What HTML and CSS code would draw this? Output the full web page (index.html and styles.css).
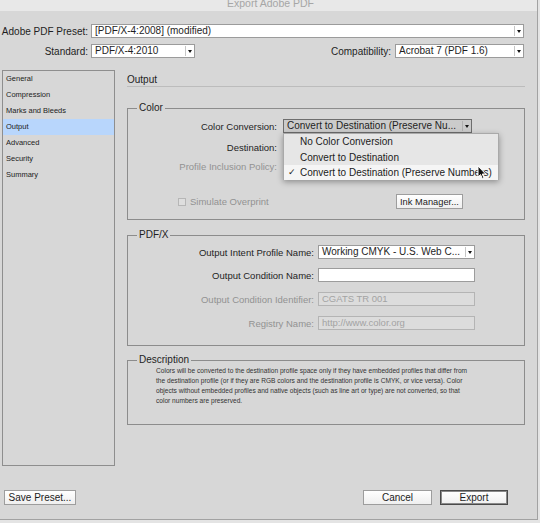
FILE: index.html
```html
<!DOCTYPE html>
<html>
<head>
<meta charset="utf-8">
<link rel="stylesheet" href="styles.css">
</head>
<body>
<div class="window">
  <div class="titlebar"><span class="title">Export Adobe PDF</span></div>
  <div class="top">
    <div class="row">
      <span class="lbl lbl-top">Adobe PDF Preset:</span>
      <div class="select grow"><span class="val">[PDF/X-4:2008] (modified)</span><span class="arr"></span></div>
    </div>
    <div class="row row2">
      <span class="lbl lbl-top">Standard:</span>
      <div class="select std"><span class="val">PDF/X-4:2010</span><span class="arr"></span></div>
      <span class="lbl compat-lbl">Compatibility:</span>
      <div class="select compat"><span class="val">Acrobat 7 (PDF 1.6)</span><span class="arr"></span></div>
    </div>
  </div>
  <div class="main">
    <ul class="sidebar">
      <li>General</li>
      <li>Compression</li>
      <li>Marks and Bleeds</li>
      <li class="active">Output</li>
      <li>Advanced</li>
      <li>Security</li>
      <li>Summary</li>
    </ul>
    <div class="content">
      <div class="heading">Output</div>
      <fieldset class="group color">
        <legend>Color</legend>
        <div class="frow cr1">
          <span class="flbl">Color Conversion:</span>
          <div class="select open cc">
            <span class="val">Convert to Destination (Preserve Nu...</span><span class="arr"></span>
            <div class="menu">
              <div class="mitem">No Color Conversion</div>
              <div class="mitem">Convert to Destination</div>
              <div class="mitem checked"><span class="check">✓</span>Convert to Destination (Preserve Numbers)</div>
              <svg class="cursor" width="10" height="15" viewBox="0 0 10 15"><path d="M1 1 L1 12 L3.6 9.6 L5.4 13.8 L7 13.1 L5.3 9 L8.6 9 Z" fill="#111" stroke="#fff" stroke-width="1"/></svg>
            </div>
          </div>
        </div>
        <div class="frow cr2"><span class="flbl">Destination:</span></div>
        <div class="frow cr3"><span class="flbl disabled">Profile Inclusion Policy:</span></div>
        <div class="frow cr4">
          <span class="checkbox"></span>
          <span class="disabled sim">Simulate Overprint</span>
          <span class="btn ink">Ink Manager...</span>
        </div>
      </fieldset>
      <fieldset class="group pdfx">
        <legend>PDF/X</legend>
        <div class="prow pr1">
          <span class="plbl">Output Intent Profile Name:</span>
          <div class="select pctl"><span class="val">Working CMYK - U.S. Web C...</span><span class="arr"></span></div>
        </div>
        <div class="prow pr2">
          <span class="plbl">Output Condition Name:</span>
          <div class="input pctl"></div>
        </div>
        <div class="prow pr3">
          <span class="plbl disabled">Output Condition Identifier:</span>
          <div class="input pctl dis">CGATS TR 001</div>
        </div>
        <div class="prow pr4">
          <span class="plbl disabled">Registry Name:</span>
          <div class="input pctl dis">http://www.color.org</div>
        </div>
      </fieldset>
      <fieldset class="group desc">
        <legend>Description</legend>
        <p class="desctext">Colors will be converted to the destination profile space only if they have embedded profiles that differ from<br>the destination profile (or if they are RGB colors and the destination profile is CMYK, or vice versa). Color<br>objects without embedded profiles and native objects (such as line art or type) are not converted, so that<br>color numbers are preserved.</p>
      </fieldset>
    </div>
  </div>
  <div class="footer">
    <span class="btn save">Save Preset...</span>
    <span class="btn cancel">Cancel</span>
    <span class="btn export">Export</span>
  </div>
</div>
</body>
</html>
```
FILE: styles.css
```css
* { box-sizing: border-box; }
html, body { margin: 0; padding: 0; }
body {
  width: 540px;
  height: 523px;
  background: #e4e4e4;
  font-family: "Liberation Sans", Arial, sans-serif;
  color: #1e1e1e;
  overflow: hidden;
}
.window {
  width: 538px;
  height: 520px;
  background: #d7d7d7;
  border-right: 1px solid #a2a2a2;
  border-bottom: 1px solid #a2a2a2;
  display: flex;
  flex-direction: column;
}
.titlebar {
  height: 11px;
  background: #e8e8e8;
  overflow: hidden;
  text-align: center;
  padding-left: 4px;
}
.title {
  display: block;
  font-size: 10.5px;
  line-height: 11px;
  margin-top: -2px;
  color: #a6a6a6;
}
.top { padding: 13px 13px 0 0; }
.row { display: flex; align-items: center; height: 14px; }
.row2 { margin-top: 6px; }
.lbl { font-size: 10px; white-space: nowrap; }
.lbl-top { width: 88px; text-align: right; margin-right: 3px; }
.compat-lbl { margin-left: auto; margin-right: 4px; }

.select {
  height: 14px;
  border: 1px solid #9b9b9b;
  background: #fff;
  display: flex;
  align-items: center;
  font-size: 10px;
  position: relative;
}
.select .val { flex: 1; padding-left: 3px; line-height: 12px; white-space: nowrap; overflow: hidden; }
.select .arr {
  width: 9px;
  height: 10px;
  border-left: 1px solid #c6c6c6;
  display: flex;
  align-items: center;
  justify-content: center;
}
.select .arr::after {
  content: "";
  border-left: 2.5px solid transparent;
  border-right: 2.5px solid transparent;
  border-top: 3px solid #151515;
}
.grow { flex: 1; }
.std { width: 104px; }
.compat { width: 129px; }

.main { display: flex; margin-top: 12px; height: 396px; }
.sidebar {
  list-style: none;
  margin: 0 0 0 2px;
  padding: 0;
  width: 113px;
  height: 396px;
  border: 1px solid #8e8e8e;
}
.sidebar li {
  height: 16px;
  line-height: 16px;
  font-size: 7.5px;
  padding-left: 3px;
  color: #222;
}
.sidebar li.active { background: #b8d6fc; }

.content { margin-left: 12px; width: 398px; }
.heading {
  font-size: 10px;
  line-height: 13px;
  padding-top: 3px;
  height: 17px;
  border-bottom: 1px solid #bcbcbc;
}
.group {
  margin: 0;
  border: 1px solid #8c8c8c;
  padding: 0;
  min-width: 0;
}
.group legend {
  font-size: 10px;
  line-height: 12px;
  padding: 0 2px;
  margin-left: 9px;
}
.color { margin-top: 15px; padding: 5px 0 10px 0; }
.frow { display: flex; align-items: center; height: 14px; }
.flbl { width: 149px; text-align: right; font-size: 9.5px; white-space: nowrap; margin-right: 6px; }
.disabled { color: #929292; }
.cr2 { margin-top: 7px; }
.cr3 { margin-top: 5px; }
.cr4 { margin-top: 21px; height: 15px; }
.cc { width: 189px; background: #cbcbcb; border-color: #6e6e6e; }
.cc .arr { border-left-color: #b0b0b0; }
.menu {
  position: absolute;
  left: -1px;
  top: 13px;
  width: 216px;
  height: 47px;
  background: #e6e6e6;
  border: 1px solid #a9a9a9;
  box-shadow: 0 2px 6px rgba(0,0,0,0.35);
  z-index: 5;
}
.mitem {
  height: 15.5px;
  line-height: 15.5px;
  padding-left: 16px;
  font-size: 10px;
  white-space: nowrap;
  position: relative;
  color: #1b1b1b;
}
.mitem.checked { background: #f5f5f5; height: 15px; line-height: 15px; }
.check { position: absolute; left: 4px; font-size: 9px; }
.cursor { position: absolute; left: 193px; top: 31px; }

.checkbox {
  width: 8px;
  height: 8px;
  border: 1px solid #b6b6b6;
  background: #dedede;
  margin-left: 50px;
  margin-right: 4px;
}
.sim { font-size: 9.5px; }
.btn {
  display: inline-flex;
  align-items: center;
  justify-content: center;
  height: 15px;
  border: 1px solid #9d9d9d;
  background: linear-gradient(#ffffff, #efefef);
  font-size: 10px;
  color: #1c1c1c;
  white-space: nowrap;
}
.ink { width: 67px; margin-left: auto; margin-right: 61px; font-size: 9.3px; }

.pdfx { margin-top: 9px; padding: 4px 0 15px 0; }
.prow { display: flex; align-items: center; height: 14px; }
.pr2 { margin-top: 9px; }
.pr3, .pr4 { margin-top: 10px; }
.plbl { width: 186px; text-align: right; font-size: 9.5px; margin-right: 4px; white-space: nowrap; }
.pctl { width: 157px; }
.input {
  height: 14px;
  border: 1px solid #9c9c9c;
  background: #fff;
  font-size: 9.5px;
  line-height: 12px;
  padding-left: 3px;
}
.input.dis { background: #dcdcdc; border-color: #b4b4b4; color: #a3a3a3; }

.desc { margin-top: 8px; height: 71px; padding: 0; }
.desctext {
  margin: 0;
  padding-left: 28px;
  font-size: 6.6px;
  line-height: 10px;
  color: #333;
  white-space: nowrap;
}

.footer { display: flex; align-items: center; margin-top: 24px; padding-right: 29px; }
.save { width: 72px; margin-left: 4px; }
.cancel { width: 69px; margin-left: auto; }
.export { width: 68px; margin-left: 8px; border: 1px solid #4a4a4a; box-shadow: inset 0 0 0 1px #8a8a8a; }
```
